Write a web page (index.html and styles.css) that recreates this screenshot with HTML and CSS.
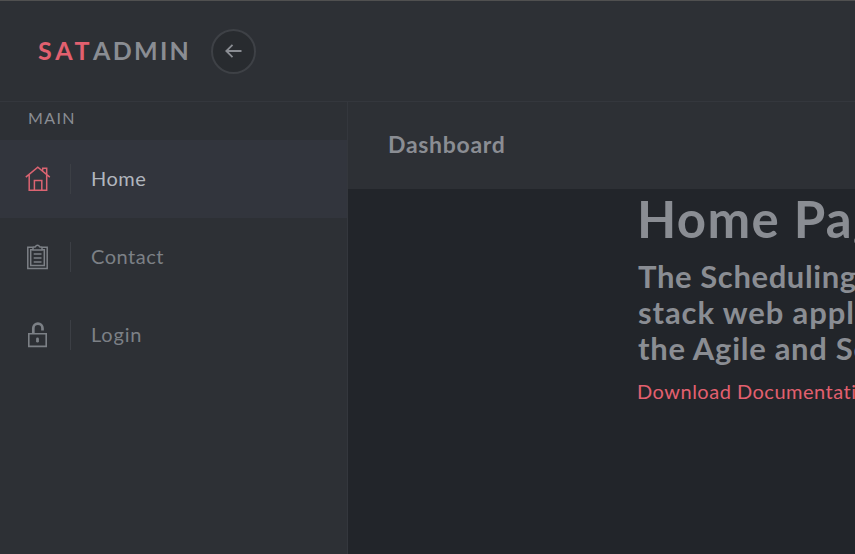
FILE: index.html
```html
<!DOCTYPE html>
<html lang="en">
<head>
<meta charset="utf-8">
<title>SatAdmin</title>
<link rel="stylesheet" href="styles.css">
</head>
<body>
<header class="header">
  <a class="brand"><span class="brand-accent">SAT</span><span class="brand-rest">ADMIN</span></a>
  <button class="toggle" aria-label="Toggle sidebar">
    <svg width="18" height="14" viewBox="0 0 18 14" fill="none" stroke="currentColor" stroke-width="1.8"><path d="M16.5 7H1.500M7.500 .9L1.300 7l6.200 6.100"/></svg>
  </button>
</header>
<div class="layout">
  <nav class="sidebar">
    <span class="heading">MAIN</span>
    <a class="item active">
      <svg class="icon" width="26" height="26" viewBox="0 0 26 26" fill="none" stroke="currentColor" stroke-width="1.5"><path d="M.8 11.2L12.8 1.2l12 10M4.2 9v15.2h17.5V9M9.4 24v-9.6h7.4V24M17.7 4.5V2.2h4v6"/></svg>
      <span class="label">Home</span>
    </a>
    <a class="item">
      <svg class="icon clip" width="26" height="26" viewBox="0 0 26 26" fill="none" stroke="currentColor" stroke-width="1.5"><path d="M8 3.2H2.8v21.2h19.4V3.2H17M8 5.8H5.7v15.8h13.6V5.8H17M8 6V3.2l2.4-.4C11.2 .8 13.8 .8 14.6 2.8L17 3.2V6zM8.7 10H16.5M8.7 14H16.5M8.7 18H16.5"/></svg>
      <span class="label">Contact</span>
    </a>
    <a class="item">
      <svg class="icon lock" width="26" height="26" viewBox="0 0 26 26" fill="none" stroke="currentColor"><path stroke-width="1.6" d="M3.8 11.8h17.4v12.6H3.8z"/><path stroke-width="2.7" d="M8.3 12V6.2a4.6 4.6 0 0 1 9.2 0v2.2"/><path stroke-width="2.8" stroke-linecap="round" d="M12.5 17v2.2"/></svg>
      <span class="label login">Login</span>
    </a>
  </nav>
  <main class="content">
    <div class="page-header"><h2 class="page-title">Dashboard</h2></div>
    <section class="hero">
      <h1 class="title">Home Page</h1>
      <h2 class="intro"><span class="line">The Scheduling</span><span class="line l2">stack web application</span><span class="line l3">the Agile and Scrum</span></h2>
      <a class="download">Download Documentation</a>
    </section>
  </main>
</div>
</body>
</html>
```
FILE: styles.css
```css
* { box-sizing: border-box; }
body { margin: 0; height: 554px; overflow: hidden; display: flex; flex-direction: column; background: #22252a; color: #8a8d93; font-family: Lato, "Liberation Sans", sans-serif; font-size: 20px; }
h1, h2 { margin: 0; }
.header { height: 102px; flex: none; display: flex; align-items: center; padding-left: 38px; background: #2d3035; border-top: 1px solid #505050; border-bottom: 1px solid #34373d; }
.brand { width: 173px; display: flex; padding-bottom: 2px; font-size: 25px; font-weight: 700; white-space: nowrap; }
.brand-accent { width: 55px; color: #e2606f; letter-spacing: 3.8px; }
.brand-rest { letter-spacing: 2.3px; }
.toggle { width: 45px; height: 45px; padding: 0; display: grid; place-items: center; border: 2px solid #3e4146; border-radius: 50%; background: #282b2f; color: #8a8d93; }
.layout { flex: 1; display: flex; min-height: 0; }
.sidebar { width: 348px; flex: none; background: #2d3035; border-right: 1px solid #34373d; }
.heading { display: block; height: 38px; padding-left: 28px; font-size: 16px; line-height: 32px; letter-spacing: 1.4px; }
.item { height: 78px; display: flex; align-items: center; padding-left: 25px; color: #7c8086; }
.icon { flex: none; }
.clip, .lock { margin-top: -1px; }
.label { height: 30px; line-height: 28px; margin-left: 19px; padding-left: 20px; border-left: 1px solid #3c3f45; letter-spacing: .5px; }
.login { letter-spacing: .8px; }
.active { background: #32353d; color: #b1b6be; }
.active .icon { color: #dc6472; }
.content { flex: 1; min-width: 0; overflow: hidden; }
.page-header { height: 87px; padding-left: 40px; background: #2d3035; }
.page-title { font-size: 23px; line-height: 85px; font-weight: 700; letter-spacing: .7px; }
.hero { width: 600px; margin-left: 289px; white-space: nowrap; }
.title { font-size: 51px; line-height: 60px; font-weight: 700; letter-spacing: 1.3px; }
.intro { margin-top: 9px; padding-left: 1px; font-size: 31px; font-weight: 700; letter-spacing: .6px; }
.l2 { letter-spacing: .9px; }
.l3 { letter-spacing: .7px; }
.line { display: block; width: max-content; height: 36px; line-height: 36px; }
.download { display: block; margin-top: 10px; line-height: 30px; color: #e2606f; letter-spacing: .5px; }
```
